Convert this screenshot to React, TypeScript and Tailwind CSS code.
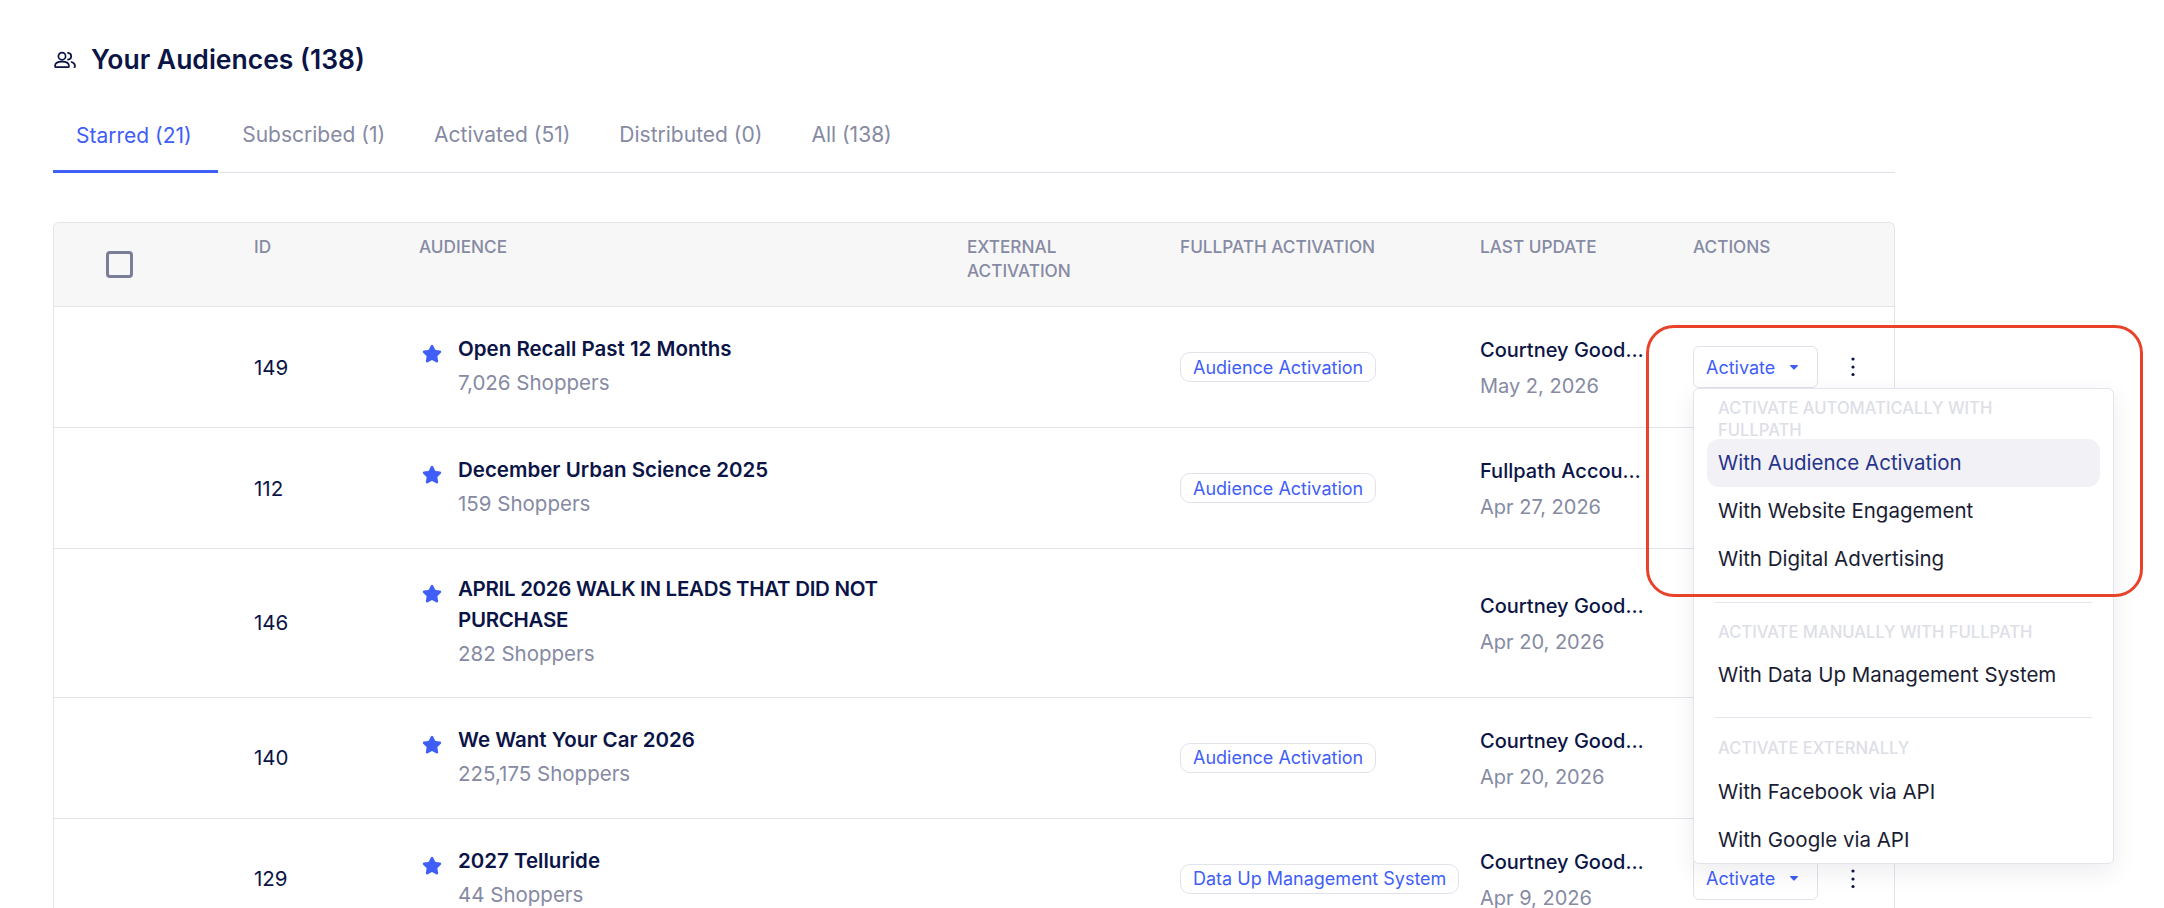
import { Star } from 'lucide-react'

const grid = 'grid grid-cols-[200px_165px_548px_213px_300px_213px_1fr]'

type Row = {
  id: number
  name: string
  shoppers: string
  badge?: string
  owner: string
  date: string
  open?: boolean
  tall?: boolean
}

const rows: Row[] = [
  { id: 149, name: 'Open Recall Past 12 Months', shoppers: '7,026 Shoppers', badge: 'Audience Activation', owner: 'Courtney Goodman', date: 'May 2, 2026', open: true },
  { id: 112, name: 'December Urban Science 2025', shoppers: '159 Shoppers', badge: 'Audience Activation', owner: 'Fullpath Account Team', date: 'Apr 27, 2026' },
  { id: 146, name: 'APRIL 2026 WALK IN LEADS THAT DID NOT PURCHASE', shoppers: '282 Shoppers', owner: 'Courtney Goodman', date: 'Apr 20, 2026', tall: true },
  { id: 140, name: 'We Want Your Car 2026', shoppers: '225,175 Shoppers', badge: 'Audience Activation', owner: 'Courtney Goodman', date: 'Apr 20, 2026' },
  { id: 129, name: '2027 Telluride', shoppers: '44 Shoppers', badge: 'Data Up Management System', owner: 'Courtney Goodman', date: 'Apr 9, 2026' },
]

const tabs = ['Subscribed (1)', 'Activated (51)', 'Distributed (0)', 'All (138)']

function AudienceIcon() {
  return (
    <svg width="24" height="18" viewBox="0 0 24 18" fill="none" stroke="#0b1446" strokeWidth="1.7" strokeLinecap="round" strokeLinejoin="round">
      <circle cx="9" cy="5.2" r="3.6" />
      <path d="M2 15.2c0-3 3-4.6 7-4.6s7 1.6 7 4.6c0 .6-.4 1-1 1H3c-.6 0-1-.4-1-1z" />
      <path d="M15 1.8c2 .3 3.2 1.7 3.2 3.4s-1.2 3.1-3.2 3.4" />
      <path d="M18.5 11c2 .6 3.5 2 3.5 4.2 0 .5-.2.9-.6 1" />
    </svg>
  )
}

function ActivateMenu() {
  const heading = 'text-[16.6px] leading-[22px] font-medium text-[#dddee6] pl-[11px]'
  const item = 'h-[48px] flex items-center px-[11px] text-[20.5px] text-[#1a1d33]'
  return (
    <div className="absolute left-0 top-[42px] z-20 w-[421px] h-[476px] bg-white border border-[#e3e4ec] rounded-md shadow-[0_8px_24px_rgba(20,24,60,0.08)] px-[13px]">
      <div className={`${heading} pt-[8px] mb-[-2px] w-[350px]`}>ACTIVATE AUTOMATICALLY WITH FULLPATH</div>
      <div className={`${item} bg-[#f2f2f6] rounded-xl text-[#27348b]`}>With Audience Activation</div>
      <div className={item}>With Website Engagement</div>
      <div className={item}>With Digital Advertising</div>
      <div className="h-px bg-[#e3e4ec] mx-[8px] mt-[19px]" />
      <div className={`${heading} pt-[18px]`}>ACTIVATE MANUALLY WITH FULLPATH</div>
      <div className={`${item} mt-[8px]`}>With Data Up Management System</div>
      <div className="h-px bg-[#e3e4ec] mx-[8px] mt-[18px]" />
      <div className={`${heading} pt-[19px]`}>ACTIVATE EXTERNALLY</div>
      <div className={`${item} mt-[9px]`}>With Facebook via API</div>
      <div className={item}>With Google via API</div>
    </div>
  )
}

function ActionsCell({ open }: { open?: boolean }) {
  return (
    <div className="flex items-center">
      <div className="relative">
        <button className="w-[125px] h-[42px] flex items-center pl-[12px] border border-[#e1e2ea] rounded-md bg-white text-[18px] text-[#3f5ef8]">
          Activate
          <svg className="ml-[15px]" width="8" height="5" viewBox="0 0 8 5" fill="#3f5ef8">
            <path d="M.6 0h6.8c.5 0 .8.6.4 1L4.4 4.5c-.2.3-.6.3-.8 0L.2 1C-.2.6.1 0 .6 0z" />
          </svg>
        </button>
        {open && <ActivateMenu />}
      </div>
      <svg className="ml-[32px]" width="6" height="22" viewBox="0 0 6 22" fill="#0b1446">
        <circle cx="3" cy="3" r="1.6" />
        <circle cx="3" cy="11" r="1.6" />
        <circle cx="3" cy="18.5" r="1.6" />
      </svg>
    </div>
  )
}

function TableRow({ row }: { row: Row }) {
  return (
    <div className={`${grid} ${row.tall ? 'h-[148.5px]' : 'h-[121px]'} items-center border-b border-[#e3e3e8]`}>
      <div />
      <div className="pt-[2px] text-[20.5px] text-[#0b1446]">{row.id}</div>
      <div className="flex gap-[16px] pl-[3px] pb-[3px]">
        <Star size={20} fill="#3f5ef8" stroke="#3f5ef8" className="mt-[11px] shrink-0" />
        <div className="w-[450px]">
          <div className={`text-[20.5px] leading-[31px] font-semibold text-[#0b1446] ${row.tall ? 'tracking-[-0.3px]' : ''}`}>{row.name}</div>
          <div className="text-[20.5px] leading-[31px] mt-[3px] text-[#868aa3]">{row.shoppers}</div>
        </div>
      </div>
      <div />
      <div>
        {row.badge && (
          <span className="inline-flex items-center h-[30px] px-[12px] rounded-[10px] border border-[#e1e2ea] text-[18px] text-[#3f5ef8] whitespace-nowrap">
            {row.badge}
          </span>
        )}
      </div>
      <div className="pt-[2px]">
        <div className="w-[165px] truncate text-[20px] leading-[28px] font-medium text-[#0b1446]">{row.owner}</div>
        <div className="text-[20px] leading-[28px] mt-[8px] text-[#868aa3]">{row.date}</div>
      </div>
      <ActionsCell open={row.open} />
    </div>
  )
}

export default function App() {
  return (
    <div className="relative h-[908px] overflow-hidden bg-white pl-[53px] font-['Inter',sans-serif]">
      <div className="w-[1842px]">
        <div className="flex items-center gap-[14px] pt-[34px] h-[90px] pb-[4px]">
          <AudienceIcon />
          <h1 className="text-[26.5px] font-semibold text-[#0b1446]">Your Audiences (138)</h1>
        </div>

        <div className="flex h-[83px] border-b border-[#dfe0e8]">
          <div className="flex items-center pl-[23px] pr-[26px] pt-[11px] text-[21px] text-[#3f5ef8] border-b-[3px] border-[#3f5ef8] -mb-px">Starred (21)</div>
          {tabs.map((t) => (
            <div key={t} className="flex items-center px-[24.5px] pt-[8px] text-[21px] text-[#868aa3]">{t}</div>
          ))}
        </div>

        <div className="mt-[49px] border-x border-t border-[#e3e3e8] rounded-t-md">
          <div className={`${grid} h-[84px] pt-[12px] bg-[#f7f7f8] border-b border-[#e3e3e8] rounded-t-md text-[17.2px] leading-[24px] font-medium text-[#868aa3]`}>
            <div className="pl-[52px] pt-[16px]">
              <div className="w-[27px] h-[27px] border-[3px] border-[#7a7f99] rounded-[4px]" />
            </div>
            <div>ID</div>
            <div>AUDIENCE</div>
            <div>EXTERNAL<br />ACTIVATION</div>
            <div>FULLPATH ACTIVATION</div>
            <div>LAST UPDATE</div>
            <div>ACTIONS</div>
          </div>
          {rows.map((r) => (
            <TableRow key={r.id} row={r} />
          ))}
        </div>
      </div>

      {/* annotation from the original screenshot */}
      <div className="absolute left-[1646px] top-[325px] z-30 w-[497px] h-[272px] border-[3px] border-[#e8432a] rounded-[28px]" />
    </div>
  )
}
